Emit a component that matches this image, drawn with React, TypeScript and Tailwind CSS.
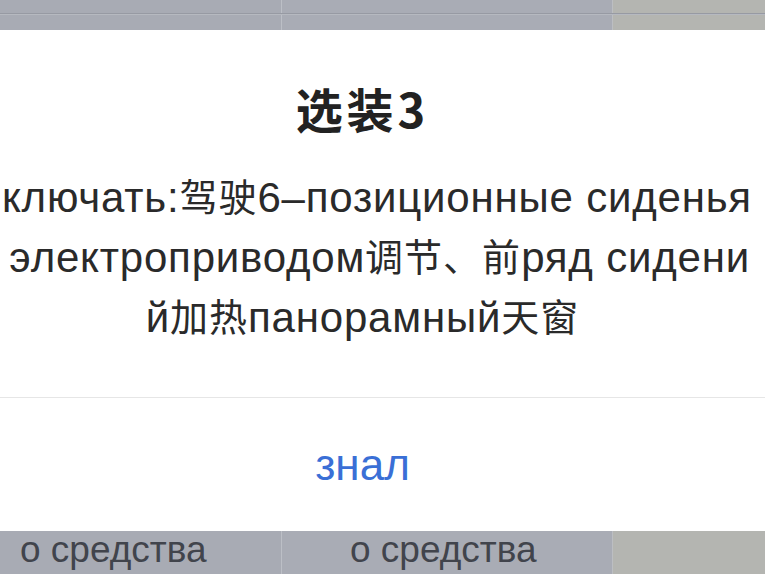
const sans = '"Liberation Sans", "Noto Sans CJK SC", sans-serif'

const bodyLines = [
  'Включать:驾驶6–позиционные сиденья',
  'с электроприводом调节、前ряд сидени',
  'й加热панорамный天窗',
]

// Han characters run a little smaller than the Cyrillic around them
function Mixed({ text }: { text: string }) {
  const parts = text.split(/([\u3000-\u303f\u4e00-\u9fff]+)/)
  return (
    <>
      {parts.map((part, i) =>
        i % 2 === 1 ? (
          <span key={i} className="text-[38px] tracking-[1px]">
            {part}
          </span>
        ) : (
          <span key={i}>{part}</span>
        ),
      )}
    </>
  )
}

function Columns({ children }: { children?: [React.ReactNode, React.ReactNode] }) {
  return (
    <div className="flex h-full">
      <div className="w-[282px] border-r border-[#bcbfc6] bg-[#a8abb4] overflow-hidden">
        {children?.[0]}
      </div>
      <div className="w-[331px] border-r border-[#bcbec2] bg-[#a9acb5] overflow-hidden">
        {children?.[1]}
      </div>
      <div className="flex-1 bg-[#b4b5b1]" />
    </div>
  )
}

export default function App() {
  return (
    <div
      className="w-[765px] h-[574px] overflow-hidden flex flex-col bg-[#a9acb5]"
      style={{ fontFamily: sans }}
    >
      {/* list rows behind the sheet */}
      <div className="h-[30px] relative shrink-0">
        <Columns />
        <div className="absolute left-0 right-0 top-[13px] h-px bg-[#979aa3]" />
        <div className="absolute left-0 right-0 top-[14px] h-px bg-[#b6b9c0]" />
      </div>

      <div className="h-[501px] shrink-0 bg-white flex flex-col">
        <div className="flex-1 flex flex-col pt-[50px]">
          <div
            className="flex justify-center h-[56px] leading-[56px] text-[47px] font-bold text-[#222] tracking-[4px] mr-[40px]"
            style={{ fontFamily: '"Noto Sans CJK SC", sans-serif' }}
          >
            选装3
          </div>
          <div className="mt-[32px] flex flex-col mr-[40px] text-[42px] tracking-[0.8px] text-[#2a2a2a]">
            {bodyLines.map((line) => (
              <div key={line} className="flex justify-center whitespace-nowrap h-[60px] leading-[60px]">
                <Mixed text={line} />
              </div>
            ))}
          </div>
        </div>
        <div className="h-px bg-[#e6e6e6]" />
        <div className="h-[133px] flex items-center justify-center mr-[40px] text-[44px] text-[#3a6fd6]">
          знал
        </div>
      </div>

      <div className="h-[43px] shrink-0">
        <Columns>
          <div className="pl-[20px] text-[37px] leading-[37px] text-[#41444c] whitespace-nowrap">о средства</div>
          <div className="pl-[68px] text-[37px] leading-[37px] text-[#41444c] whitespace-nowrap">о средства</div>
        </Columns>
      </div>
    </div>
  )
}
